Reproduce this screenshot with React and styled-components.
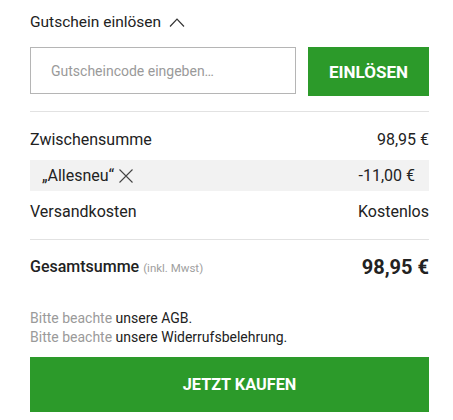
import React from "react";
import styled, { createGlobalStyle } from "styled-components";

const GlobalStyle = createGlobalStyle`
  body {
    margin: 0;
    background: #fff;
    font-family: Roboto, "Liberation Sans", sans-serif;
    color: #222;
  }
`;

const Wrapper = styled.div`
  width: 399px;
  padding: 12px 0 0 30px;
`;

const Toggle = styled.div`
  display: flex;
  align-items: center;
  gap: 8px;
  height: 20px;
  font-size: 15.5px;
  color: #222;
`;

const VoucherForm = styled.div`
  display: flex;
  gap: 12px;
  margin-top: 15px;
  padding-bottom: 15px;
  border-bottom: 1px solid #e2e2e2;
`;

const Input = styled.input`
  box-sizing: border-box;
  width: 266px;
  height: 47px;
  border: 1px solid #b5b5b5;
  padding: 0 20px;
  font-family: inherit;
  font-size: 14px;
  color: #222;
  outline: none;
  &::placeholder {
    color: #9a9a9a;
  }
`;

const Button = styled.button`
  border: none;
  background: #2c9a2a;
  color: #fff;
  font-family: inherit;
  font-weight: 700;
  font-size: ${(p) => (p.$big ? "16.3px" : "17px")};
  width: ${(p) => (p.$big ? "100%" : "121px")};
  height: ${(p) => (p.$big ? "55px" : "49px")};
  padding: ${(p) => (p.$big ? "0 0 0 20px" : "0")};
  cursor: pointer;
`;

const Rows = styled.div`
  padding: 12px 0 12px;
  border-bottom: 1px solid #e2e2e2;
`;

const Row = styled.div`
  display: flex;
  justify-content: space-between;
  align-items: center;
  height: 31px;
  font-size: 16px;
  color: #222;
  padding: ${(p) => (p.$discount ? "0 14px 0 12px" : "0")};
  background: ${(p) => (p.$discount ? "#f2f2f2" : "transparent")};
  margin: ${(p) => (p.$discount ? "5px 0" : "0")};
`;

const Code = styled.span`
  display: flex;
  align-items: center;
  gap: 5px;
`;

const Total = styled.div`
  display: flex;
  justify-content: space-between;
  align-items: center;
  height: 53px;
`;

const TotalLabel = styled.span`
  font-size: 16px;
  font-weight: 500;
  small {
    font-size: 11.5px;
    font-weight: 400;
    color: #a0a0a0;
  }
`;

const TotalValue = styled.span`
  font-size: 20px;
  font-weight: 700;
`;

const Notes = styled.div`
  margin-top: 16px;
  font-size: 14px;
  line-height: 19px;
  color: #222;
  span {
    color: #9a9a9a;
  }
`;

const Checkout = styled.div`
  margin-top: 10px;
`;

const ChevronUp = () => (
  <svg width="16" height="9" viewBox="0 0 16 9" fill="none">
    <path d="M1 8.5 L8 1.2 L15 8.5" stroke="#333" strokeWidth="1.2" />
  </svg>
);

const Cross = () => (
  <svg width="14" height="14" viewBox="0 0 14 14" fill="none">
    <path d="M0.5 0.5 L13.5 13.5 M13.5 0.5 L0.5 13.5" stroke="#444" strokeWidth="1.1" />
  </svg>
);

export default function App() {
  return (
    <>
      <GlobalStyle />
      <Wrapper>
        <Toggle>
          Gutschein einlösen <ChevronUp />
        </Toggle>
        <VoucherForm>
          <Input placeholder="Gutscheincode eingeben…" />
          <Button>EINLÖSEN</Button>
        </VoucherForm>
        <Rows>
          <Row>
            <span>Zwischensumme</span>
            <span>98,95 €</span>
          </Row>
          <Row $discount>
            <Code>
              „Allesneu“ <Cross />
            </Code>
            <span>-11,00 €</span>
          </Row>
          <Row>
            <span>Versandkosten</span>
            <span>Kostenlos</span>
          </Row>
        </Rows>
        <Total>
          <TotalLabel>
            Gesamtsumme <small>(inkl. Mwst)</small>
          </TotalLabel>
          <TotalValue>98,95 €</TotalValue>
        </Total>
        <Notes>
          <div>
            <span>Bitte beachte</span> unsere AGB.
          </div>
          <div>
            <span>Bitte beachte</span> unsere Widerrufsbelehrung.
          </div>
        </Notes>
        <Checkout>
          <Button $big>JETZT KAUFEN</Button>
        </Checkout>
      </Wrapper>
    </>
  );
}
